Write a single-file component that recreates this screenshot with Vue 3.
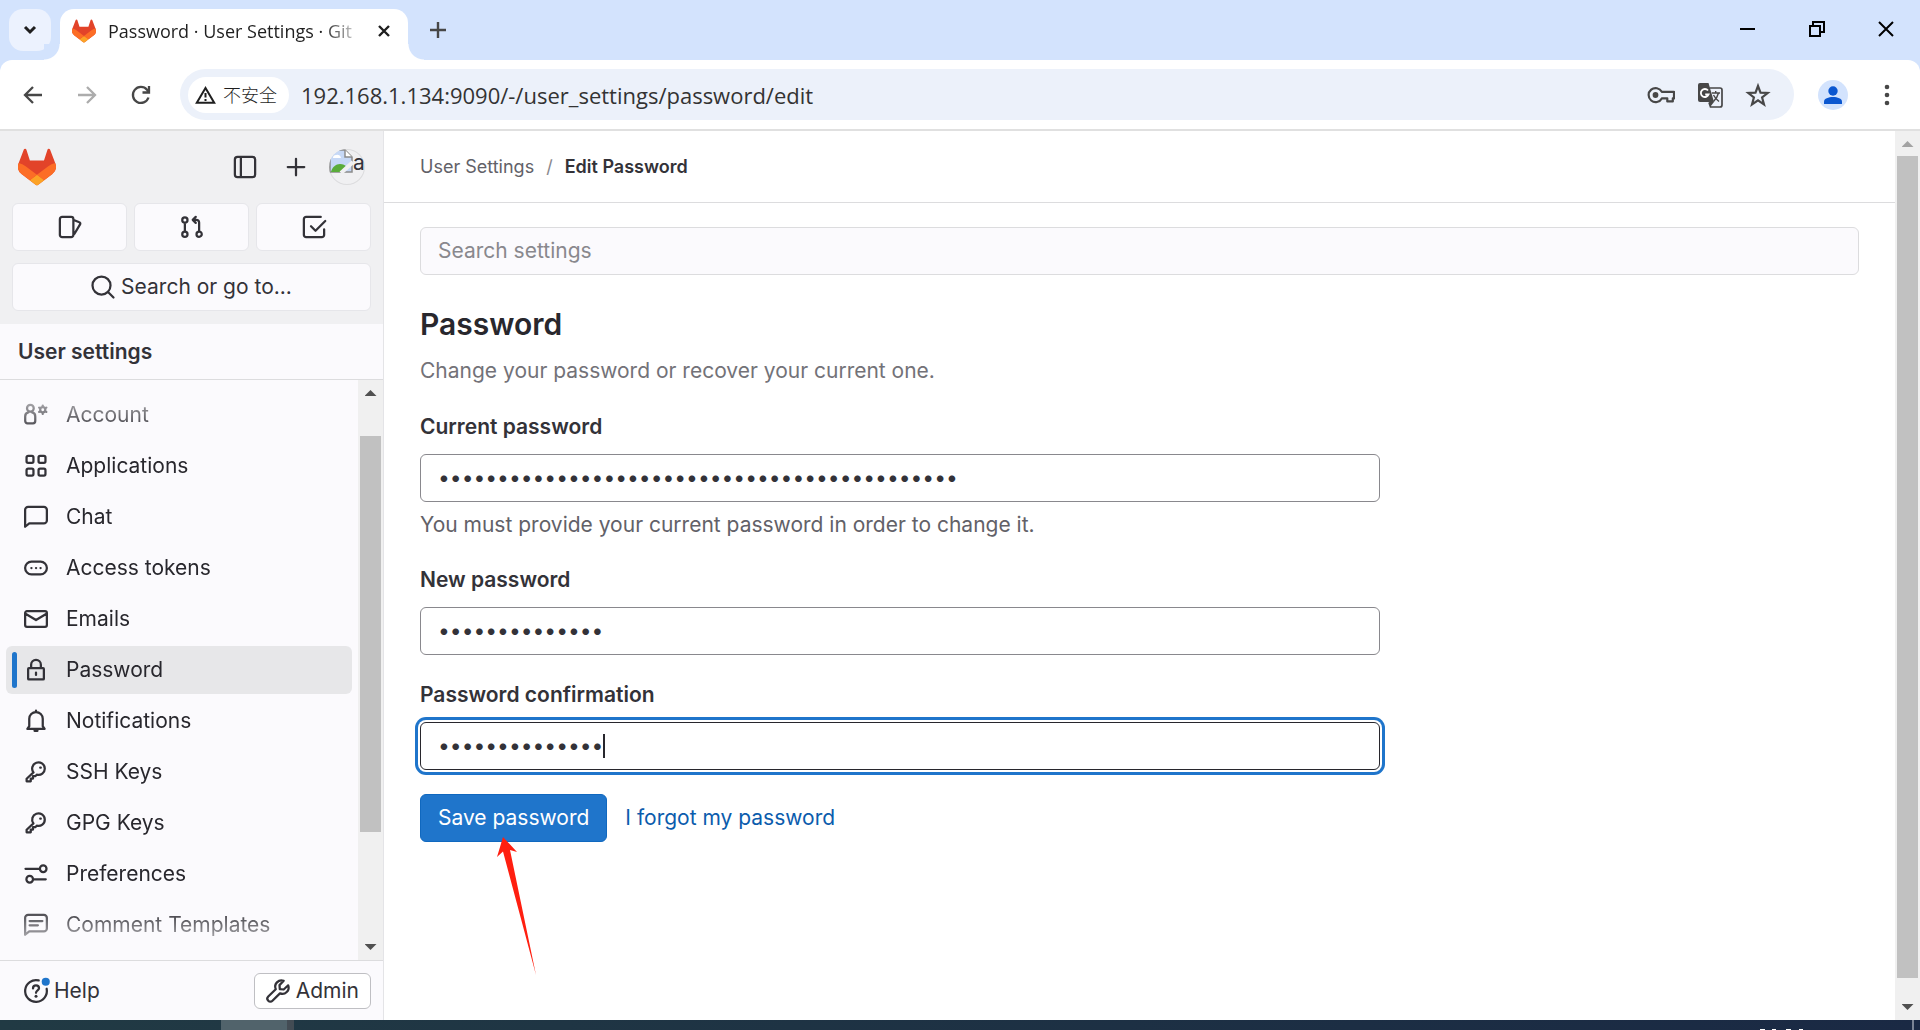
<template>
  <div class="window">
    <!-- tab strip -->
    <header class="tab-strip">
      <button class="tab-search" aria-label="Search tabs">
        <svg width="14" height="10" viewBox="0 0 14 10"><path d="M2 2l5 5 5-5" fill="none" stroke="#1f1f1f" stroke-width="3" /></svg>
      </button>
      <div class="tab">
        <svg class="tab-logo" viewBox="0 0 25 24">
          <path v-for="p in tanuki" :key="p.d" :d="p.d" :fill="p.fill" />
        </svg>
        <span class="tab-title">Password · User Settings · Git</span>
        <button class="tab-close" aria-label="Close tab">
          <svg width="14" height="14" viewBox="0 0 14 14"><path d="M2 2l10 10M12 2L2 12" stroke="#1f1f1f" stroke-width="2.4" /></svg>
        </button>
      </div>
      <button class="new-tab" aria-label="New tab">
        <svg width="16" height="16" viewBox="0 0 16 16"><path d="M8 0v16M0 8h16" stroke="#474747" stroke-width="2.4" /></svg>
      </button>
      <div class="window-controls">
        <button aria-label="Minimize">
          <svg width="16" height="16" viewBox="0 0 16 16"><path d="M0 8h15" stroke="#000" stroke-width="2" /></svg>
        </button>
        <button aria-label="Restore">
          <svg width="16" height="16" viewBox="0 0 16 16"><path d="M1 5h10v10H1zM4 5V1h11v10h-4" fill="none" stroke="#000" stroke-width="2" /></svg>
        </button>
        <button aria-label="Close">
          <svg width="16" height="16" viewBox="0 0 16 16"><path d="M1 1l14 14M15 1L1 15" stroke="#000" stroke-width="2" /></svg>
        </button>
      </div>
    </header>

    <!-- toolbar -->
    <div class="toolbar-wrap">
      <div class="toolbar">
        <button class="nav-btn" aria-label="Back">
          <svg width="20" height="20" viewBox="0 0 20 20"><path d="M19 10H3M10 2l-8 8 8 8" fill="none" stroke="#474747" stroke-width="2.3" /></svg>
        </button>
        <button class="nav-btn" aria-label="Forward" disabled>
          <svg width="20" height="20" viewBox="0 0 20 20"><path d="M1 10h16M10 2l8 8-8 8" fill="none" stroke="#acacac" stroke-width="2.3" /></svg>
        </button>
        <button class="nav-btn" aria-label="Reload">
          <svg width="20" height="20" viewBox="0 0 20 20"><path d="M17.500 12.500A8 8 0 1 1 16 4.700L18 7M18 1v6.500h-6.500" fill="none" stroke="#474747" stroke-width="2.3" /></svg>
        </button>
        <div class="omnibox">
          <button class="chip">
            <svg width="21" height="18" viewBox="0 0 21 18"><path d="M10.500 2L1.800 16.700h17.400z" fill="none" stroke="#1f1f1f" stroke-width="2" /><path d="M10.500 7v4.500M10.500 13v2" stroke="#1f1f1f" stroke-width="2" /></svg>
            <span>不安全</span>
          </button>
          <input class="url" type="text" aria-label="Address" value="192.168.1.134:9090/-/user_settings/password/edit" />
          <div class="omni-actions">
            <button aria-label="Manage passwords">
              <svg width="28" height="28" viewBox="0 0 28 28">
                <path d="M14.800 10.800H27v6.600h-1.200v3h-5.500v-3h-5.500A7 7 0 1 1 14.800 10.800z" fill="none" stroke="#474747" stroke-width="2.200" stroke-linejoin="round" />
                <circle cx="8.500" cy="14" r="2.900" fill="#474747" />
              </svg>
            </button>
            <button aria-label="Translate this page">
              <svg width="26" height="26" viewBox="0 0 26 26">
                <path d="M3 1h8.500l5.500 19H3a2 2 0 0 1-2-2V3a2 2 0 0 1 2-2z" fill="#474747" />
                <path d="M12.500 6h10.500a2 2 0 0 1 2 2v15a2 2 0 0 1-2 2H13.500l-1.500-4.500" fill="none" stroke="#474747" stroke-width="1.700" />
                <path d="M12 20l5 0-3.500 4.500z" fill="#474747" />
                <path d="M14.800 11h8.200M18.700 9v2M21.500 11c-1 4-3 6.500-5 8.500M16.500 13c1.500 3 3.500 5 5.500 6.500" fill="none" stroke="#474747" stroke-width="1.400" />
                <path d="M11 8.500a4 4 0 1 0 .6 4H8.200" fill="none" stroke="#fff" stroke-width="1.800" />
              </svg>
            </button>
            <button aria-label="Bookmark this tab">
              <svg width="26" height="26" viewBox="0 0 26 26"><path d="M13 4l2.500 6.700 7.200.3-5.600 4.500 1.900 6.900-6-4-6 4 1.900-6.900L3.300 11l7.200-.3z" fill="none" stroke="#474747" stroke-width="2.200" /></svg>
            </button>
          </div>
        </div>
        <button class="profile" aria-label="Profile">
          <svg width="20" height="20" viewBox="0 0 20 20"><circle cx="10" cy="6" r="4.700" fill="#0b57d0" /><path d="M1 19v-2.500C1 13.500 5.500 12 10 12s9 1.500 9 4.500V19z" fill="#0b57d0" /></svg>
        </button>
        <button class="more" aria-label="Chrome menu">
          <svg width="6" height="22" viewBox="0 0 6 22"><circle v-for="y in [3, 11, 19]" :key="y" cx="3" :cy="y" r="2.300" fill="#474747" /></svg>
        </button>
      </div>
    </div>

    <!-- page -->
    <div class="page">
      <aside class="sidebar">
        <div class="side-top">
          <div class="side-brand">
            <a href="#" class="brand" aria-label="Homepage">
              <svg width="38" height="38" viewBox="0 0 25 24">
                <path v-for="p in tanuki" :key="p.d" :d="p.d" :fill="p.fill" />
              </svg>
            </a>
            <button aria-label="Primary navigation sidebar">
              <svg class="icon" viewBox="0 0 16 16"><path :d="icons.sidebar" /></svg>
            </button>
            <button aria-label="Create new">
              <svg class="icon" viewBox="0 0 16 16"><path d="M8 2.500v11M2.500 8h11" /></svg>
            </button>
            <button class="avatar" aria-label="User menu">
              <svg width="24" height="24" viewBox="0 0 24 24">
                <path d="M1 1h15l7 7v15H1z" fill="#c6d8f6" stroke="#8b8b8b" stroke-width="1.500" />
                <path d="M16 1v7h7" fill="#fff" stroke="#8b8b8b" stroke-width="1.500" />
                <path d="M4 9a3 3 0 0 1 3-3 3.500 3.500 0 0 1 5 3z" fill="#fff" />
                <path d="M2 23c1-5 5-8 9-8 3 0 5 1 7 3l-4 5z" fill="#5aac3a" />
                <path d="M24 13L12 24" stroke="#f0f0f2" stroke-width="4" />
              </svg>
              <span>a</span>
            </button>
          </div>
          <div class="side-counts">
            <button v-for="c in counters" :key="c.icon" :aria-label="c.label">
              <svg class="icon" viewBox="0 0 16 16"><path :d="icons[c.icon]" /></svg>
            </button>
          </div>
          <button class="side-search">
            <svg class="icon" viewBox="0 0 16 16"><path d="M13 7A6 6 0 1 1 1 7a6 6 0 0 1 12 0zM11.500 11.500l3.500 3.500" /></svg>
            <span>Search or go to...</span>
          </button>
        </div>
        <h2 class="side-title">User settings</h2>
        <div class="side-scroll">
          <nav class="side-nav">
            <a v-for="item in navItems" :key="item.text" href="#" :class="{ active: item.active }">
              <svg class="icon" viewBox="0 0 16 16"><path :d="icons[item.icon]" /></svg>
              <span>{{ item.text }}</span>
            </a>
          </nav>
          <div class="scrollbar side-bar">
            <i class="arrow up"></i>
            <i class="thumb"></i>
            <i class="arrow down"></i>
          </div>
        </div>
        <div class="side-footer">
          <button class="help">
            <svg class="icon" viewBox="0 0 16 16">
              <path d="M9.800.95A7.250 7.250 0 1 0 15.100 6.500M6 6.300C6 5 6.800 4.300 8 4.300s2 .8 2 1.800C10 7.500 8 7.600 8 9.200" />
              <circle class="fill" cx="8" cy="11.500" r="1" />
              <circle class="dot" cx="14.500" cy="1.800" r="2.700" />
            </svg>
            <span>Help</span>
          </button>
          <a href="#" class="admin">
            <svg class="icon" viewBox="0 0 16 16"><path :d="icons.admin" /></svg>
            <span>Admin</span>
          </a>
        </div>
      </aside>

      <main class="content">
        <nav class="crumbs">
          <a href="#">User Settings</a>
          <span class="sep">/</span>
          <strong>Edit Password</strong>
        </nav>
        <div class="settings">
          <input class="settings-search" type="text" placeholder="Search settings" aria-label="Search settings" />
          <h1>Password</h1>
          <p class="intro">Change your password or recover your current one.</p>
          <form class="form" @submit.prevent>
            <div v-for="f in fields" :key="f.id" class="field">
              <label :for="f.id">{{ f.label }}</label>
              <div class="input-wrapper">
                <input :id="f.id" v-model="form[f.id]" type="password" :class="{ focused: f.focused }" />
                <i v-if="f.focused" class="caret"></i>
              </div>
              <p v-if="f.hint" class="hint">{{ f.hint }}</p>
            </div>
            <div class="actions">
              <button type="submit" class="save">Save password</button>
              <a href="#">I forgot my password</a>
              <svg class="pointer" width="42" height="138" viewBox="0 0 42 138"><path d="M6 0L20 15l-7-2 26 125L6 14.500 0 20z" fill="#ff1f10" /></svg>
            </div>
          </form>
        </div>
      </main>

      <div class="scrollbar page-bar">
        <i class="arrow up muted"></i>
        <i class="thumb"></i>
        <i class="arrow down"></i>
      </div>
    </div>

    <!-- taskbar edge -->
    <footer class="taskbar">
      <i class="task-active"></i>
      <i class="task-edge"></i>
      <svg class="clock" width="46" height="10" viewBox="0 0 46 10"><path d="M1 9.500h5M13 9.500h4M27 9.500h5M40 9.500h4" stroke="#fff" stroke-width="1" /></svg>
      <i class="desktop-line"></i>
    </footer>
  </div>
</template>

<script setup>
import { reactive } from 'vue';

const tanuki = [
  { fill: '#e24329', d: 'm24.507 9.500-.034-.09L21.082.562a.896.896 0 0 0-1.694.091l-2.290 7.010H7.825L5.535.653a.898.898 0 0 0-1.694-.090L.451 9.411.416 9.500a6.297 6.297 0 0 0 2.090 7.278l.012.010.030.022 5.160 3.867 2.560 1.935 1.554 1.176a1.051 1.051 0 0 0 1.268 0l1.555-1.176 2.560-1.935 5.197-3.890.014-.010A6.297 6.297 0 0 0 24.507 9.500Z' },
  { fill: '#fc6d26', d: 'm24.507 9.500-.034-.090a11.440 11.440 0 0 0-4.560 2.051l-7.447 5.632 4.742 3.584 5.197-3.890.014-.010A6.297 6.297 0 0 0 24.507 9.500Z' },
  { fill: '#fca326', d: 'm7.707 20.677 2.560 1.935 1.555 1.176a1.051 1.051 0 0 0 1.268 0l1.555-1.176 2.560-1.935-4.743-3.584-4.755 3.584Z' },
  { fill: '#fc6d26', d: 'M5.010 11.461a11.430 11.430 0 0 0-4.560-2.050L.416 9.500a6.297 6.297 0 0 0 2.090 7.278l.012.010.030.022 5.160 3.867 4.745-3.584-7.444-5.632Z' }
];

const icons = {
  sidebar: 'M3 1.250h10A1.750 1.750 0 0 1 14.750 3v10A1.750 1.750 0 0 1 13 14.750H3A1.750 1.750 0 0 1 1.250 13V3A1.750 1.750 0 0 1 3 1.250zM5.250 1.250v13.500',
  issues: 'M2.750 1.250h6a1.500 1.500 0 0 1 1.500 1.500v10.500a1.500 1.500 0 0 1-1.500 1.500h-6a1.500 1.500 0 0 1-1.500-1.500V2.750a1.500 1.500 0 0 1 1.500-1.500zM10.500 3.300l3.700 1.500a1 1 0 0 1 .6 1.300L11 12.500',
  merge: 'M5 3.250a1.750 1.750 0 1 1-3.500 0 1.750 1.750 0 0 1 3.500 0zM5 12.750a1.750 1.750 0 1 1-3.500 0 1.750 1.750 0 0 1 3.500 0zM14.500 12.750a1.750 1.750 0 1 1-3.500 0 1.750 1.750 0 0 1 3.500 0zM3.250 5v6M12.750 11V5a1.750 1.750 0 0 0-1.750-1.750H9M10.500 1.250L8.500 3.250l2 2',
  todo: 'M12.500 1.250H2.750a1.500 1.500 0 0 0-1.500 1.500v10.500a1.500 1.500 0 0 0 1.500 1.500h10.500a1.500 1.500 0 0 0 1.500-1.500V9.500M6 7.500l3 3 6.500-6.500',
  account: 'M6.500 3.500a2.250 2.250 0 1 1-4.500 0 2.250 2.250 0 0 1 4.500 0zM2.800 6.300A2.700 2.700 0 0 0 .8 9V12a1.500 1.500 0 0 0 1.500 1.500h3.700A1.500 1.500 0 0 0 7.500 12V9a2.700 2.700 0 0 0-2-2.700M14.200 4.500a1.700 1.700 0 1 1-3.400 0 1.700 1.700 0 0 1 3.400 0zM12.500 1.700v1M12.500 6.300v1M10.100 3.100l.8.500M14.100 5.400l.8.500M10.100 5.900l.8-.5M14.100 3.600l.8-.5',
  applications: 'M2.700 1.250h2.600a1 1 0 0 1 1 1v2.600a1 1 0 0 1-1 1H2.700a1 1 0 0 1-1-1v-2.600a1 1 0 0 1 1-1zM10.700 1.250h2.600a1 1 0 0 1 1 1v2.600a1 1 0 0 1-1 1h-2.600a1 1 0 0 1-1-1v-2.600a1 1 0 0 1 1-1zM2.700 9.750h2.600a1 1 0 0 1 1 1v2.600a1 1 0 0 1-1 1H2.700a1 1 0 0 1-1-1v-2.600a1 1 0 0 1 1-1zM10.700 9.750h2.600a1 1 0 0 1 1 1v2.600a1 1 0 0 1-1 1h-2.600a1 1 0 0 1-1-1v-2.600a1 1 0 0 1 1-1z',
  chat: 'M.75 14.500V3.250a2 2 0 0 1 2-2h10.500a2 2 0 0 1 2 2v7a2 2 0 0 1-2 2H3.500z',
  token: 'M5 3.750h6a4.250 4.250 0 0 1 0 8.500H5a4.250 4.250 0 0 1 0-8.500zM4.900 8h.1M8 8h.1M11 8h.1',
  mail: 'M2 2.750h12a1.250 1.250 0 0 1 1.250 1.250v8a1.250 1.250 0 0 1-1.250 1.250H2A1.250 1.250 0 0 1 .75 12V4A1.250 1.250 0 0 1 2 2.750zM1 4.500l7 4.200 7-4.200',
  lock: 'M3.250 6.750h9.500a.5.5 0 0 1 .5.5v6.500a.5.5 0 0 1-.5.5h-9.500a.5.5 0 0 1-.5-.5v-6.500a.5.5 0 0 1 .5-.5zM4.750 6.500V4.500a3.250 3.250 0 0 1 6.500 0v2M8 9.700v1.600',
  bell: 'M8 1v1M3.500 11.500V6.500a4.500 4.500 0 0 1 9 0v5l1.250 1.750H2.250zM7 14.500h2',
  key: 'M6.300 8.300A4.200 4.200 0 1 1 8.500 9.800L7.500 10.800H6v1.600H4.500v1.800H1.750v-1.700zM10.800 5.100h.4',
  preferences: 'M15 4.500a2.200 2.200 0 1 1-4.400 0 2.200 2.200 0 0 1 4.400 0zM6 11.500a2.200 2.200 0 1 1-4.400 0 2.200 2.200 0 0 1 4.400 0zM1 4.500h9.500M6 11.500h8.500',
  comment: 'M.75 14.500V3.250a2 2 0 0 1 2-2h10.500a2 2 0 0 1 2 2v7a2 2 0 0 1-2 2H3.500zM3.750 5.400h8.500M3.750 8.200h5.500',
  admin: 'M11.800 1.200a4.200 4.200 0 0 0-5.300 5.600L1.500 11.700a1.900 1.900 0 0 0 2.800 2.800l5-4.900a4.200 4.200 0 0 0 5.500-5.400L11.800 7 9.200 6.800 9 4.100z'
};

const counters = [
  { icon: 'issues', label: 'Assigned issues' },
  { icon: 'merge', label: 'Merge requests' },
  { icon: 'todo', label: 'To-Do List' }
];

const navItems = [
  { text: 'Account', icon: 'account' },
  { text: 'Applications', icon: 'applications' },
  { text: 'Chat', icon: 'chat' },
  { text: 'Access tokens', icon: 'token' },
  { text: 'Emails', icon: 'mail' },
  { text: 'Password', icon: 'lock', active: true },
  { text: 'Notifications', icon: 'bell' },
  { text: 'SSH Keys', icon: 'key' },
  { text: 'GPG Keys', icon: 'key' },
  { text: 'Preferences', icon: 'preferences' },
  { text: 'Comment Templates', icon: 'comment' }
];

const fields = [
  { id: 'current', label: 'Current password', hint: 'You must provide your current password in order to change it.' },
  { id: 'password', label: 'New password' },
  { id: 'confirm', label: 'Password confirmation', focused: true }
];

const form = reactive({
  current: 'x'.repeat(44),
  password: 'x'.repeat(14),
  confirm: 'x'.repeat(14)
});
</script>

<style>
body { margin: 0; overflow: hidden; }
</style>

<style scoped>
* { box-sizing: border-box; }
.window { display: flex; flex-direction: column; height: 100vh; font-family: Inter, "Noto Sans CJK SC", sans-serif; font-size: 21px; line-height: 30px; color: #333238; background: #fff; }
button { padding: 0; border: none; background: none; font: inherit; color: inherit; cursor: pointer; }
a { color: inherit; text-decoration: none; }
svg { display: block; flex: none; }

/* tabs */
.tab-strip { display: flex; align-items: flex-start; height: 60px; padding: 9px 0 0 9px; background: #d3e3fd; font-family: "Open Sans", sans-serif; }
.tab-search { display: flex; align-items: center; justify-content: center; width: 42px; height: 42px; border-radius: 14px; background: #ecf2fe; }
.tab { position: relative; display: flex; align-items: center; width: 348px; height: 51px; margin-left: 9px; padding: 0 13px 8px 12px; border-radius: 14px 14px 0 0; background: #fff; }
.tab::before, .tab::after { content: ""; position: absolute; bottom: 0; width: 16px; height: 16px; }
.tab::before { left: -16px; background: radial-gradient(circle at 0 0, #d3e3fd 15px, #fff 16px); }
.tab::after { right: -16px; background: radial-gradient(circle at 100% 0, #d3e3fd 15px, #fff 16px); }
.tab-logo { width: 24px; height: 24px; }
.tab-title { flex: 1; margin-left: 12px; white-space: nowrap; font-size: 18px; color: #1f1f1f; mask-image: linear-gradient(to right, #000 215px, transparent 256px); }
.tab-close { padding: 4px; }
.new-tab { margin: 13px 0 0 22px; }
.window-controls { display: flex; gap: 53px; margin: 12px 26px 0 auto; }

/* toolbar */
.toolbar-wrap { background: #d3e3fd; border-bottom: 2px solid #e0e0e0; }
.toolbar { display: flex; align-items: center; height: 69px; padding: 0 30px 0 23px; border-radius: 12px 12px 0 0; background: #fff; }
.nav-btn { margin-right: 34px; }
.nav-btn + .nav-btn + .nav-btn { margin-right: 29px; }
.omnibox { display: flex; flex: 1; align-items: center; height: 51px; padding: 0 23px 0 8px; border-radius: 26px; background: #ecf1fa; font-family: "Open Sans", "Noto Sans CJK SC", sans-serif; }
.chip { display: flex; align-items: center; gap: 7px; height: 36px; padding: 0 12px 0 7px; border-radius: 18px; background: #fff; font-size: 18px; font-weight: 300; color: #1f1f1f; }
.url { flex: 1; min-width: 0; margin-left: 12px; padding: 0; border: none; outline: none; background: none; font: inherit; font-size: 22px; color: #333; }
.omni-actions { display: flex; align-items: center; gap: 22px; }
.profile { display: flex; align-items: center; justify-content: center; width: 30px; height: 30px; margin-left: 24px; border-radius: 50%; background: #d3e3fd; }
.more { margin-left: 36px; }

.page { display: flex; flex: 1; min-height: 0; }
.icon { width: 24px; height: 24px; overflow: visible; }
.icon path { fill: none; stroke: #333238; stroke-width: 1.5; stroke-linejoin: round; stroke-linecap: round; }
.icon .fill { fill: #333238; }
.icon .dot { fill: #1f75cb; }

/* sidebar */
.sidebar { display: flex; flex-direction: column; width: 384px; border-right: 1px solid #e4e4e7; background: #fbfafd; }
.side-top { display: flex; flex-direction: column; gap: 12px; padding: 0 12px 13px; background: #f0f0f2; }
.side-brand { display: flex; align-items: center; height: 72px; margin-bottom: -12px; padding: 0 6px; }
.brand { margin-right: auto; }
.side-brand button { margin-left: 27px; }
.side-brand .avatar { display: flex; width: 36px; height: 36px; margin-left: 21px; overflow: hidden; border-radius: 50%; box-shadow: inset 0 0 0 1px #dcdcde; line-height: 27px; }
.side-counts { display: grid; grid-template-columns: repeat(3, 1fr); gap: 7px; }
.side-counts button, .side-search { display: flex; align-items: center; justify-content: center; height: 48px; border: 1px solid #e6e6ea; border-radius: 6px; background: #fbfafd; }
.side-search { gap: 6px; line-height: 32px; }
.side-title { height: 56px; margin: 0; padding: 0 18px; border-bottom: 1px solid #dcdcde; font-size: 21px; line-height: 56px; font-weight: 600; }
.side-scroll { display: flex; flex: 1; min-height: 0; }
.side-nav { display: flex; flex: 1; flex-direction: column; gap: 3px; padding: 11px 6px 0; overflow: hidden; mask-image: linear-gradient(to bottom, transparent, #000 54px, #000 calc(100% - 54px), transparent); }
.side-nav a { position: relative; display: flex; flex: none; align-items: center; gap: 18px; height: 48px; padding-left: 18px; border-radius: 6px; color: #28272d; }
.side-nav a.active { background: #e7e7e9; }
.side-nav a.active::before { content: ""; position: absolute; left: 6px; top: 6px; bottom: 6px; width: 5px; border-radius: 3px; background: #1f75cb; }
.side-footer { display: flex; align-items: center; justify-content: space-between; height: 60px; padding: 0 12px 0 24px; border-top: 1px solid #dcdcde; }
.help, .admin { display: flex; align-items: center; gap: 6px; }
.admin { height: 36px; padding: 0 11px; border: 1px solid #bfbfc3; border-radius: 6px; background: #fff; }

/* scrollbars */
.scrollbar { display: flex; flex: none; flex-direction: column; align-items: center; width: 25px; background: #f0f0f0; }
.scrollbar .thumb { width: 21px; background: #c1c1c1; }
.arrow { width: 12px; height: 6px; background: #505050; }
.arrow.up { margin-top: 10px; clip-path: polygon(50% 0, 100% 100%, 0 100%); }
.arrow.down { margin-top: auto; margin-bottom: 10px; clip-path: polygon(0 0, 100% 0, 50% 100%); }
.arrow.muted { background: #a3a3a3; }
.side-bar .thumb { flex: 1; margin: 40px 0 112px; }
.page-bar .thumb { flex: 1; margin: 9px 0 26px; }

/* content */
.content { flex: 1; min-width: 0; }
.crumbs { display: flex; align-items: center; gap: 12px; height: 72px; padding: 0 36px; border-bottom: 1px solid #dcdcde; font-size: 18px; color: #626168; }
.crumbs strong { font-weight: 600; color: #333238; }
.sep { color: #89888d; }
.settings { padding: 24px 36px 0; }
.settings input { display: block; width: 100%; height: 48px; padding: 0 17px 2px; border: 1px solid #89888d; border-radius: 6px; outline: none; background: #fff; font: inherit; color: #333238; }
.settings .settings-search { border-color: #dcdcde; background: #fbfafd; }
.settings-search::placeholder { color: #89888d; opacity: 1; }
h1 { margin: 30px 0 0; font-size: 30px; line-height: 38px; font-weight: 600; color: #28272d; }
.intro { margin: 13px 0 0; color: #737278; }
.form { max-width: 960px; margin-top: 25px; }
.field { margin-bottom: 24px; }
.field label { display: block; margin-bottom: 11px; line-height: 32px; font-weight: 600; }
.input-wrapper { position: relative; }
.settings .focused { border-color: #28272d; box-shadow: 0 0 0 2px #fff, 0 0 0 5px #1f75cb; }
.caret { position: absolute; left: 183px; top: 12px; width: 2px; height: 24px; background: #28272d; }
.hint { margin: 8px 0 0; color: #626168; }
.actions { position: relative; display: flex; align-items: center; gap: 18px; }
.save { height: 48px; padding: 0 17px; border: 1px solid #1068bf; border-radius: 6px; background: #1f75cb; color: #fff; }
.actions a { color: #0b5cad; }
.pointer { position: absolute; left: 77px; top: 43px; }

/* taskbar */
.taskbar { display: flex; height: 10px; padding-left: 221px; background: linear-gradient(to right, #213a44, #1a2944); }
.task-active { width: 66px; background: #51636b; }
.task-edge { width: 7px; background: #434c54; }
.clock { margin-left: auto; }
.desktop-line { width: 2px; margin: 0 6px 0 107px; background: #7a8394; }
</style>
